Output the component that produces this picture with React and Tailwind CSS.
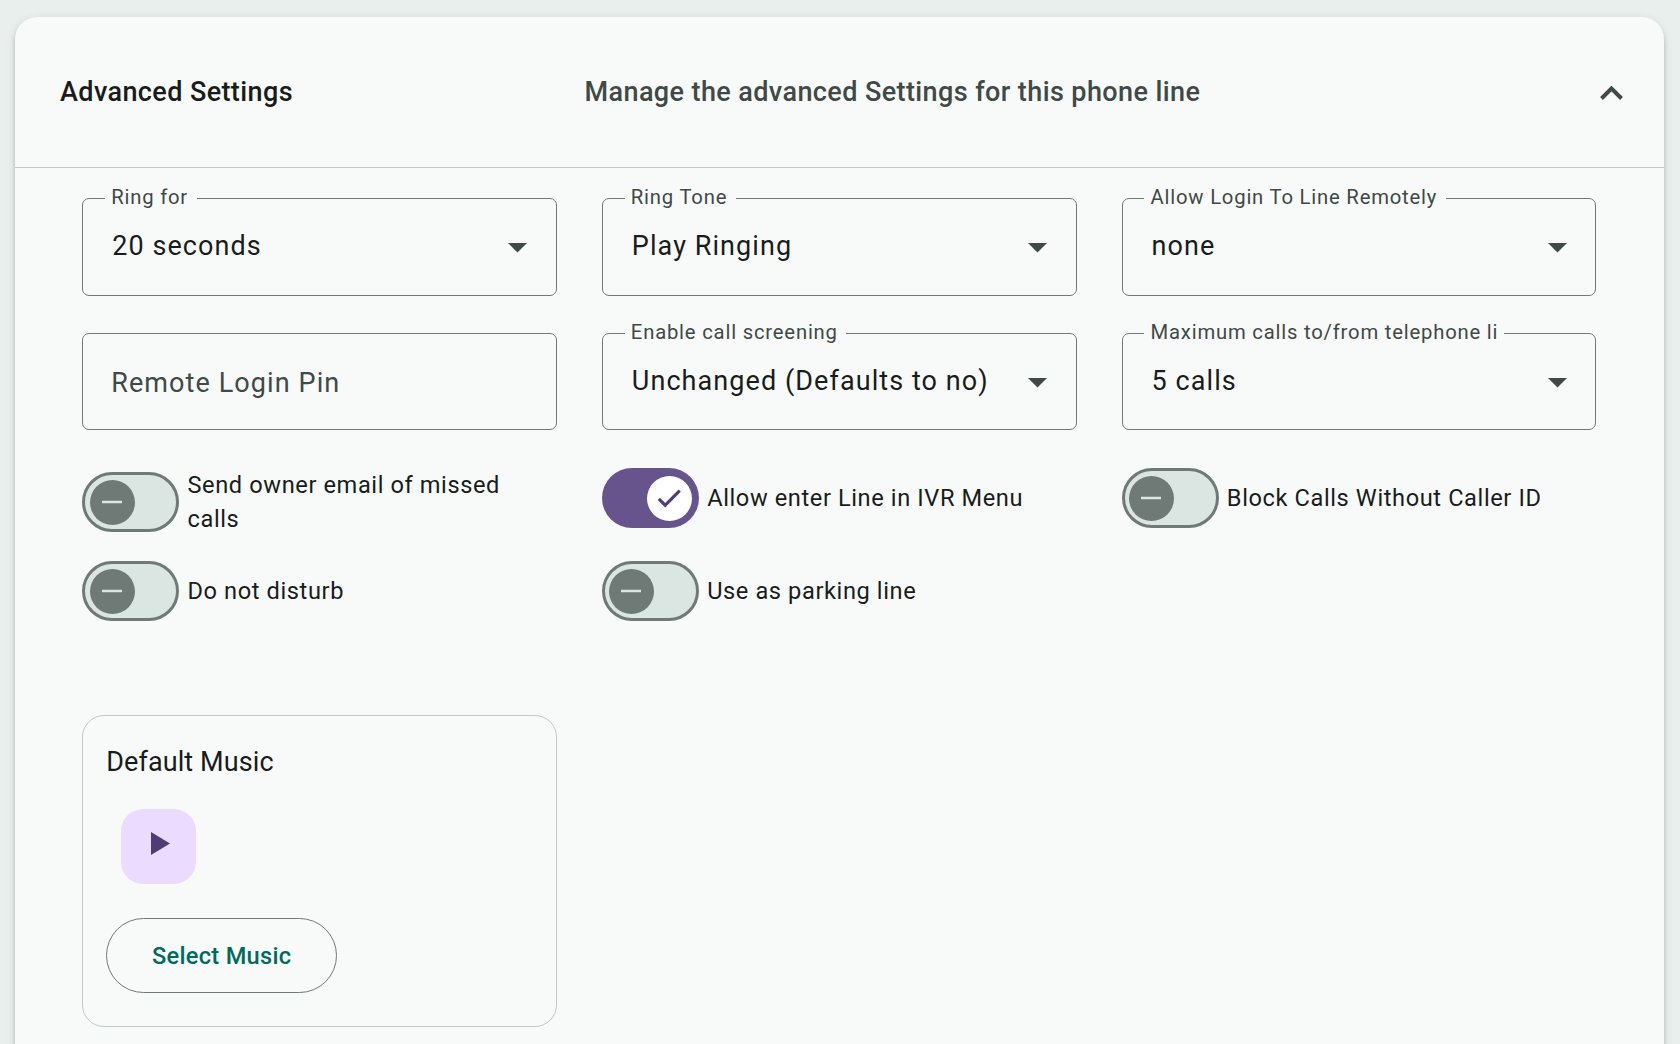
import { useState } from "react";

const fields = [
  { label: "Ring for", value: "20 seconds" },
  { label: "Ring Tone", value: "Play Ringing" },
  { label: "Allow Login To Line Remotely", value: "none" },
  { label: "Remote Login Pin", value: "", input: true },
  { label: "Enable call screening", value: "Unchanged (Defaults to no)" },
  { label: "Maximum calls to/from telephone li", value: "5 calls", clipped: true },
];

const OutlinedField = ({ label, value, input, clipped }) => {
  if (input) {
    return (
      <div className="flex items-center rounded-[7px] border border-[#6f7976] px-7">
        <span className="mt-[3px] text-[27px] leading-[45px] tracking-[1.09px] text-[#3f4946]">
          {label}
        </span>
      </div>
    );
  }

  return (
    <div className="relative flex items-center justify-between rounded-[7px] border border-[#6f7976] pr-[28.600px] pl-[29px]">
      <span
        className={`absolute -top-[18px] left-[21.700px] bg-[#f8faf9] pl-[6.300px] text-[20.25px] leading-8 tracking-[0.8px] whitespace-nowrap text-[#3f4946] ${
          clipped ? "pr-[6px]" : "pr-[8.500px]"
        }`}
      >
        {label}
      </span>
      <span className="mb-px text-[27px] leading-[45px] tracking-[1.07px] text-[#191c1b]">
        {value}
      </span>
      <svg className="mt-[2px] h-[10px] w-[19px]" viewBox="0 0 19 10" fill="#3f4946">
        <path d="M0 0h19L9.500 9.500z" />
      </svg>
    </div>
  );
};

const Toggle = ({ label, checked, onChange }) => (
  <div className="flex items-center gap-2">
    <button
      role="switch"
      aria-checked={checked}
      onClick={onChange}
      className={`flex h-[60px] w-[97.300px] shrink-0 items-center rounded-full ${
        checked
          ? "justify-end bg-[#68548d] pr-[7.300px]"
          : "justify-start border-[3px] border-[#6f7976] bg-[#dbe5e1] pl-[4.500px]"
      }`}
    >
      <span
        className={`flex h-[45px] w-[45px] items-center justify-center rounded-full ${
          checked ? "bg-white" : "bg-[#6f7976]"
        }`}
      >
        {checked ? (
          <svg className="mr-px h-[30px] w-[30px]" viewBox="0 0 24 24" fill="#4f3d74">
            <path d="M19.690 5.230L8.960 15.960l-4.230-4.230L2.960 13.500l6 6L21.460 7z" />
          </svg>
        ) : (
          <svg className="mr-px h-[30px] w-[30px]" viewBox="0 0 24 24" fill="#dbe5e1">
            <path d="M4 11h16v2H4z" />
          </svg>
        )}
      </span>
    </button>
    <span className="text-[23.625px] leading-[34px] tracking-[0.6px] text-[#191c1b]">
      {label}
    </span>
  </div>
);

const App = () => {
  const [toggles, setToggles] = useState([
    { label: "Send owner email of missed calls", checked: false },
    { label: "Allow enter Line in IVR Menu", checked: true },
    { label: "Block Calls Without Caller ID", checked: false },
    { label: "Do not disturb", checked: false },
    { label: "Use as parking line", checked: false },
  ]);

  const flip = (index) => {
    setToggles(toggles.map((t, i) => (i === index ? { ...t, checked: !t.checked } : t)));
  };

  return (
    <div className="h-[1044px] overflow-hidden bg-[#e9efec] pt-[17px] pr-4 pl-[15px] font-['Roboto',sans-serif]">
      <div className="h-[1100px] rounded-[22px] bg-[#f8faf9] shadow-[0_6px_2px_-4px_rgba(0,0,0,0.2),0_4px_4px_0_rgba(0,0,0,0.14),0_2px_9px_0_rgba(0,0,0,0.12)]">
        {/* Panel header */}
        <div className="flex h-[151px] items-center border-b border-[#bfc9c5] pr-[41px] pl-[45px]">
          <h2 className="w-[524.500px] text-[27px] font-medium tracking-[0.39px] text-[#191c1b]">
            Advanced Settings
          </h2>
          <p className="grow text-[27px] font-medium tracking-[0.4px] text-[#3f4946]">
            Manage the advanced Settings for this phone line
          </p>
          <svg className="mt-[2px] h-[14px] w-[23px]" viewBox="0 0 23 14" fill="none">
            <path d="M1.500 12.500l10-10 10 10" stroke="#3f4946" strokeWidth="4" />
          </svg>
        </div>

        <div className="pt-[30px] pr-[67.800px] pl-[67.200px]">
          <div className="grid grid-cols-3 grid-rows-[98px_97px] gap-x-[45px] gap-y-[37px]">
            {fields.map((field) => (
              <OutlinedField key={field.label} {...field} />
            ))}
          </div>

          {/* Switches */}
          <div className="mt-[38px] grid grid-cols-3 items-start gap-x-[45px] gap-y-[25px]">
            {toggles.map((toggle, index) => (
              <Toggle key={toggle.label} {...toggle} onChange={() => flip(index)} />
            ))}
          </div>

          {/* Music */}
          <div className="mt-[94px] grid grid-cols-3 gap-x-[45px]">
            <div className="flex h-[312px] flex-col items-start rounded-[22px] border border-[#bfc9c5] px-[23px] pt-6">
              <h3 className="text-[27px] leading-[45px] tracking-[0.1px] text-[#191c1b]">
                Default Music
              </h3>
              <button
                aria-label="Play"
                className="mt-6 ml-[15px] flex h-[75px] w-[75px] items-center justify-center rounded-[22px] bg-[#ebdcff]"
              >
                <svg className="mb-[6px] ml-[4px] h-[23px] w-[19px]" viewBox="0 0 19 23" fill="#4f3d74">
                  <path d="M0 0v23l19-11.500z" />
                </svg>
              </button>
              <button className="mt-[34px] h-[75px] w-[231px] rounded-full border border-[#6f7976] text-[23.625px] leading-[36px] font-medium tracking-[0.29px] text-[#006b5b]">
                Select Music
              </button>
            </div>
          </div>
        </div>
      </div>
    </div>
  );
};

export default App;
